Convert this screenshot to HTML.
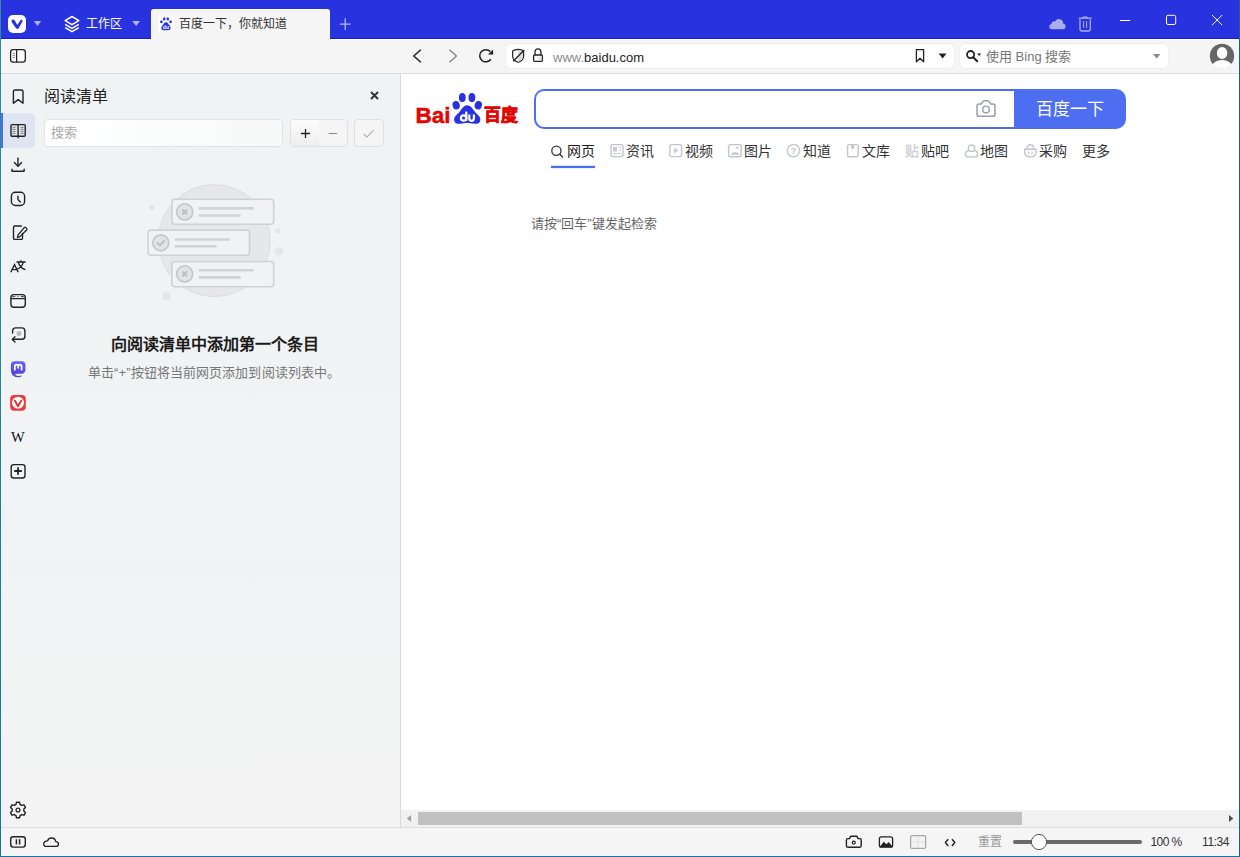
<!DOCTYPE html>
<html lang="zh-CN"><head><meta charset="utf-8">
<style>
*{box-sizing:border-box;margin:0;padding:0}
html,body{width:1240px;height:857px;overflow:hidden}
body{position:relative;background:#f5f5f5;font-family:"Liberation Sans",sans-serif;color:#222}
.a{position:absolute}
svg{position:absolute;overflow:visible}
</style></head><body>
<!-- window borders -->
<div class="a" style="left:0;top:0;width:1px;height:857px;background:linear-gradient(#2e8c9c,#1a72a0)"></div>
<div class="a" style="left:1239px;top:0;width:1px;height:857px;background:#1a5c9c"></div>
<div class="a" style="left:0;top:856px;width:1240px;height:1px;background:#1b74a0"></div>

<!-- title bar -->
<div class="a" style="left:1px;top:0;width:1238px;height:38px;background:#2832de"></div>
<div class="a" style="left:1px;top:38px;width:1238px;height:1px;background:#1820cc"></div>
<div class="a" style="left:1px;top:39px;width:1238px;height:1px;background:#fcfdf9"></div>
<!-- vivaldi logo -->
<svg style="left:0;top:0" width="1240" height="40" viewBox="0 0 1240 40">
  <rect x="8" y="15" width="18" height="18" rx="5" fill="#fff"/>
  <path d="M11.6 21.9 Q11 20.2 12.6 19.6 Q14 19.2 14.8 20.5 L17.3 24.9 L20.6 20.1 Q21.3 19.4 22.2 19.9 Q23 20.5 22.6 21.3 L18.6 28.2 Q17.3 29.6 16 28.2 Z" fill="#2832de"/>
  <path d="M33.8 21 L41.2 21 L37.5 26 Z" fill="#aeb0f0"/>
  <!-- layers icon -->
  <g fill="none" stroke="#fff" stroke-width="1.5" stroke-linejoin="round">
    <path d="M72 16.5 L78.8 20.6 L72 24.7 L65.2 20.6 Z"/>
    <path d="M65.2 24.3 L72 28.4 L78.8 24.3"/>
    <path d="M65.2 27.6 L72 31.7 L78.8 27.6"/>
  </g>
  <path d="M132.2 21 L140 21 L136.1 26 Z" fill="#aeb0f0"/>
  <!-- tab -->
  <path d="M151 40 L151 12 Q151 9 154 9 L327 9 Q330 9 330 12 L330 40 Z" fill="#f5f5f5"/><path d="M151.5 38 V12 Q151.5 9.5 154 9.5 H327 Q329.5 9.5 329.5 12 V38" fill="none" stroke="#fff" stroke-width="1" opacity=".6"/>
  <!-- plus -->
  <path d="M345.2 18.3 V30 M339.8 24.2 H350.6" stroke="#b4b7f2" stroke-width="1.3"/>
  <!-- cloud -->
  <path d="M1051.5 29.2 H1062.5 A2.8 2.8 0 0 0 1063 23.6 A4.2 4.2 0 0 0 1055 21.5 A3 3 0 0 0 1051.3 23.9 A2.7 2.7 0 0 0 1051.5 29.2 Z" fill="#a9adf0"/>
  <!-- trash -->
  <g fill="none" stroke="#a9adf0" stroke-width="1.3">
    <path d="M1078.7 18.2 H1091.6"/>
    <path d="M1082.3 18.2 Q1082.6 16.9 1085.1 16.9 Q1087.6 16.9 1087.9 18.2"/>
    <path d="M1080 19.3 V29 Q1080 31 1082 31 H1088.3 Q1090.3 31 1090.3 29 V19.3"/>
    <path d="M1083.6 21 V28 M1086.6 21 V28" stroke-width="1"/>
  </g>
  <!-- window controls -->
  <path d="M1120 20.5 H1130.2" stroke="#fff" stroke-width="1"/>
  <rect x="1166.5" y="15.3" width="9.2" height="9.2" rx="1.5" fill="none" stroke="#fff" stroke-width="1"/>
  <path d="M1212 15 L1222.2 25.2 M1222.2 15 L1212 25.2" stroke="#fff" stroke-width="1"/>
</svg>
<div class="a" style="left:86px;top:15px;font-size:12px;line-height:18px;color:#fff">工作区</div>
<!-- baidu favicon -->
<svg style="left:158px;top:16px" width="16" height="16" viewBox="0 0 16 16">
  <rect width="16" height="16" rx="2" fill="#fff"/>
  <ellipse cx="6.2" cy="2.9" rx="1.3" ry="1.6" fill="#2932e1"/>
  <ellipse cx="9.8" cy="2.9" rx="1.3" ry="1.6" fill="#2932e1"/>
  <ellipse cx="3.4" cy="5.7" rx="1.3" ry="1.5" fill="#2932e1"/>
  <ellipse cx="12.6" cy="5.7" rx="1.3" ry="1.5" fill="#2932e1"/>
  <path d="M8 6.3 C6 6.3 5.5 8.5 4.2 9.8 C2.8 11.2 3 14.3 5.6 14.3 H10.4 C13 14.3 13.2 11.2 11.8 9.8 C10.5 8.5 10 6.3 8 6.3 Z" fill="#2932e1"/>
  <text x="8" y="13.4" font-size="5.2" font-weight="bold" fill="#fff" text-anchor="middle" font-family="Liberation Sans">du</text>
</svg>
<div class="a" style="left:179px;top:15px;font-size:12px;line-height:18px;color:#333">百度一下，你就知道</div>

<!-- toolbar -->
<div class="a" id="toolbar" style="left:1px;top:40px;width:1238px;height:33px;background:#f5f5f5"></div>
<div class="a" style="left:1px;top:73px;width:1238px;height:1px;background:#dcdcdc"></div>
<div class="a" style="left:506px;top:44px;width:448px;height:24px;background:#fff;border-radius:5px;box-shadow:0 0 0 1px #efefef"></div>
<div class="a" style="left:960px;top:44px;width:208px;height:24px;background:#fff;border-radius:5px;box-shadow:0 0 0 1px #efefef"></div>
<svg style="left:0;top:40px" width="1240" height="34" viewBox="0 40 1240 34">
  <!-- panel toggle -->
  <rect x="10.6" y="49.6" width="14.7" height="12.6" rx="2.6" fill="#fff" stroke="#222" stroke-width="1.3"/>
  <path d="M16.6 49.6 V62.2" stroke="#222" stroke-width="1.3"/>
  <path d="M12.8 53.4 H14.8 M12.8 55.4 H14.8 M12.8 57.4 H14.8" stroke="#555" stroke-width="0.8"/>
  <!-- back / forward -->
  <path d="M420.8 49.8 L413.8 56 L420.8 62.2" fill="none" stroke="#222" stroke-width="1.5"/>
  <path d="M449.4 49.8 L456.4 56 L449.4 62.2" fill="none" stroke="#8a8a8a" stroke-width="1.5"/>
  <!-- reload -->
  <path d="M490.3 51.6 A6.1 6.1 0 1 0 490.8 59.3" fill="none" stroke="#222" stroke-width="1.5"/>
  <path d="M487.9 54.6 L493.1 54.6 L493.1 49.6 Z" fill="#222"/>
  <!-- shield -->
  <path d="M518.2 49.3 Q521.5 49.6 523.6 51 V56 Q523.6 60.5 518.2 62.3 Q512.6 60.5 512.6 56 V51 Q514.8 49.6 518.2 49.3 Z" fill="none" stroke="#222" stroke-width="1.2"/>
  <path d="M518.2 49.9 Q521.2 50.2 523 51.3 V56 Q523 60 518.2 61.7 Z" fill="#ddd"/>
  <path d="M513.2 61.3 L524.2 50" stroke="#222" stroke-width="1.3"/>
  <!-- lock -->
  <path d="M535 55 V52.2 Q535 48.9 538 48.9 Q541 48.9 541 52.2 V55" fill="none" stroke="#222" stroke-width="1.3"/>
  <rect x="533.6" y="55" width="8.8" height="6.3" rx="1" fill="#fff" stroke="#222" stroke-width="1.3"/>
  <rect x="538.5" y="57" width="2.8" height="3.4" fill="#ddd"/>
  <!-- bookmark -->
  <path d="M916.4 49.6 H923.6 V61.8 L920 58.3 L916.4 61.8 Z" fill="none" stroke="#222" stroke-width="1.3" stroke-linejoin="round"/>
  <path d="M938.7 53.5 H946.5 L942.6 58.6 Z" fill="#222"/>
  <!-- search icon -->
  <circle cx="970.6" cy="54.6" r="3.6" fill="none" stroke="#222" stroke-width="1.8"/>
  <path d="M973.2 57.2 L977.2 61.2" stroke="#222" stroke-width="2" stroke-linecap="round"/>
  <path d="M977 53.5 H981.3 L979.15 56 Z" fill="#222"/>
  <path d="M1153 54 H1160.4 L1156.7 58.6 Z" fill="#888"/>
  <!-- avatar -->
  <defs><clipPath id="av"><circle cx="1222" cy="56" r="12.6"/></clipPath></defs>
  <circle cx="1222" cy="56" r="12.2" fill="#666"/>
  <g clip-path="url(#av)">
    <rect x="1217" y="47" width="10.2" height="12" rx="5" ry="5.6" fill="#fff"/>
    <ellipse cx="1222.1" cy="71" rx="12" ry="11" fill="#fff"/>
  </g>
</svg>
<div class="a" style="left:553px;top:48.5px;font-size:13px;line-height:18px;color:#222;white-space:nowrap"><span style="color:#8b8b8b">www.</span>baidu.com</div>
<div class="a" style="left:986px;top:48px;font-size:13px;line-height:18px;color:#777;white-space:nowrap">使用 Bing 搜索</div>

<!-- panel bar + panel -->
<div class="a" style="left:1px;top:74px;width:399px;height:753px;background:linear-gradient(#eff3f4,#f1f3f4 50%,#f3f3f3)"></div>
<div class="a" style="left:400px;top:74px;width:1px;height:753px;background:#d9d9d9"></div>
<!-- active panel highlight -->
<div class="a" style="left:1px;top:113px;width:34px;height:35px;background:#dfe4f2;border-radius:0 5px 5px 0"></div>
<div class="a" style="left:1px;top:113px;width:2px;height:35px;background:#4a6ee8"></div>
<svg style="left:0;top:74px" width="400" height="753" viewBox="0 74 400 753">
 <g fill="none" stroke="#222" stroke-width="1.4" stroke-linejoin="round" stroke-linecap="round">
  <!-- bookmark -->
  <path d="M13.4 91.5 Q13.4 90 15 90 H21.3 Q23 90 23 91.5 V103.3 L18.2 99.6 L13.4 103.3 Z"/>
  <!-- book -->
  <path d="M11 125.6 Q11 124.6 12 124.6 H24.2 Q25.2 124.6 25.2 125.6 V135.3 Q25.2 136.3 24.2 136.3 H12 Q11 136.3 11 135.3 Z"/>
  <path d="M18.1 124.6 V137.8"/>
 </g>
 <path d="M12.6 127.4 H15.6 M12.6 129.4 H15.6 M12.6 131.4 H15.6 M12.6 133.4 H15.6 M20.6 127.4 H23.6 M20.6 129.4 H23.6 M20.6 131.4 H23.6 M20.6 133.4 H23.6" stroke="#777" stroke-width="0.9"/>
 <g fill="none" stroke="#222" stroke-width="1.4" stroke-linejoin="round" stroke-linecap="round">
  <!-- download -->
  <path d="M18 158.3 V166"/>
  <path d="M14.4 162.6 L18 166.2 L21.6 162.6"/>
  <path d="M12 169.3 V171.3 H24.1 V169.3"/>
  <!-- history -->
  <rect x="11.4" y="192.3" width="13.2" height="13.2" rx="4"/>
  <path d="M18 196.2 V199.6 L20.3 201.9"/>
  <!-- notes -->
  <path d="M21.3 226 H14.8 Q13.5 226 13.5 227.3 V238.2 Q13.5 239.4 14.8 239.4 H21.2 Q22.5 239.4 22.5 238.2 V233.4"/>
  <path d="M24.2 227.6 Q25 226.8 25.8 227.6 L26.6 228.4 Q27.4 229.2 26.6 230 L20 236.6 L17.4 237.4 L18.2 234.8 Z" stroke-width="1.3"/>
  <!-- window -->
  <rect x="10.9" y="294.6" width="14.4" height="12.6" rx="3"/>
  <path d="M10.9 298.6 H25.3"/>
  <!-- feed loop -->
  <path d="M12.6 333 V331 Q12.6 327.9 15.7 327.9 H21.8 Q24.9 327.9 24.9 331 V336.2 Q24.9 339.3 21.8 339.3 H12.6"/>
  <path d="M15 336.8 L12.3 339.4 L15 342"/>
  <!-- add -->
  <rect x="11.2" y="464.6" width="13.8" height="13.4" rx="2.5"/>
 </g>
 <path d="M12.2 296.6 H15.3 M17.4 296.6 H18.6 M20.7 296.6 H24" stroke="#444" stroke-width="1"/>
 <circle cx="19" cy="333.6" r="2.5" fill="#bbb"/>
 <path d="M18 467.2 V474.8 M14.2 471 H21.8" stroke="#222" stroke-width="1.8"/>
 <!-- translate -->
 <path d="M10.8 272.2 L14.5 264.6 L18.2 272.2 M12.4 269.6 H16.6" fill="none" stroke="#222" stroke-width="1.4"/>
 <path d="M16.5 262 H25.7 M21 260.2 V262 M18.3 262.2 Q20 268 25.4 269.6 M23.4 262.2 Q21.8 268 16.8 269.2" fill="none" stroke="#222" stroke-width="1.3"/>
 <!-- mastodon -->
 <defs><linearGradient id="mg" x1="0" y1="0" x2="0" y2="1"><stop offset="0" stop-color="#6364ff"/><stop offset="1" stop-color="#563acc"/></linearGradient></defs>
 <path d="M14.5 361.2 H21.8 Q25.4 361.2 25.4 365 V369.8 Q25.4 373.5 21.3 373.8 H17 Q14.5 374.2 15.5 375.2 Q18 376.6 21.5 375.6 V376.5 Q17 378.2 13.7 376 Q11 374.4 10.9 369.8 V365 Q10.9 361.2 14.5 361.2 Z" fill="url(#mg)"/>
 <path d="M14.8 370.6 V366.4 Q14.8 364.6 16.5 364.6 Q18.2 364.6 18.2 366.4 V368.6 M18.2 368.6 V366.4 Q18.2 364.6 19.9 364.6 Q21.6 364.6 21.6 366.4 V370.6" fill="none" stroke="#fff" stroke-width="1.7"/>
 <!-- vivaldi -->
 <rect x="10.2" y="395" width="15.6" height="15.7" rx="4" fill="#ef3939"/>
 <circle cx="18" cy="402.85" r="6" fill="#fff"/>
 <path d="M14.8 400.6 L18 406.2 L21.2 400.6" fill="none" stroke="#e22b2b" stroke-width="1.9" stroke-linecap="round" stroke-linejoin="round"/>
 <!-- gear -->
 <g transform="translate(18 810)">
  <path id="gear" d="M-2.08 -5.52 L-1.49 -7.76 L1.49 -7.76 L2.08 -5.52 L3.74 -4.56 L5.97 -5.17 L7.46 -2.59 L5.82 -0.96 L5.82 0.96 L7.46 2.59 L5.97 5.17 L3.74 4.56 L2.08 5.52 L1.49 7.76 L-1.49 7.76 L-2.08 5.52 L-3.74 4.56 L-5.97 5.17 L-7.46 2.59 L-5.82 0.96 L-5.82 -0.96 L-7.46 -2.59 L-5.97 -5.17 L-3.74 -4.56 Z" fill="none" stroke="#222" stroke-width="1.4" stroke-linejoin="round"/>
  <circle r="1.9" fill="none" stroke="#222" stroke-width="1.3"/>
 </g>
</svg>
<div class="a" style="left:11px;top:429px;font-family:'Liberation Serif',serif;font-size:14.5px;line-height:16px;color:#111">W</div>
<div class="a" style="left:44px;top:87px;font-size:16px;line-height:20px;color:#222">阅读清单</div>
<svg style="left:370px;top:91px" width="9" height="9" viewBox="0 0 9 9"><path d="M1 1 L8 8 M8 1 L1 8" stroke="#333" stroke-width="2"/></svg>
<div class="a" style="left:44px;top:119px;width:239px;height:28px;background:linear-gradient(90deg,#fff,#f7f9f9);border:1px solid #e2e4e4;border-radius:4px"></div>
<div class="a" style="left:51px;top:124px;font-size:13px;line-height:18px;color:#a8a8a8">搜索</div>
<div class="a" style="left:290px;top:119px;width:58px;height:28px;background:#f5f5f5;border:1px solid #e0e0e0;border-radius:4px;overflow:hidden"><div style="width:28px;height:26px;background:linear-gradient(#fdfdfd,#eeeeee)"></div></div>
<div class="a" style="left:354px;top:119px;width:30px;height:28px;background:#f5f5f5;border:1px solid #e0e0e0;border-radius:4px"></div>
<svg style="left:290px;top:119px" width="94" height="28" viewBox="290 119 94 28">
 <path d="M305.5 129 V138 M301 133.5 H310" stroke="#222" stroke-width="1.3"/>
 <path d="M328.7 133.5 H337.2" stroke="#888" stroke-width="1"/>
 <path d="M363.8 134.2 L366.8 137.1 L373.6 130.4" fill="none" stroke="#aaa" stroke-width="1.1"/>
</svg>

<!-- illustration -->
<svg style="left:140px;top:175px" width="150" height="130" viewBox="140 175 150 130">
 <circle cx="214.2" cy="240.6" r="56" fill="#e5e7e8" stroke="#dcdede" stroke-width="1"/>
 <circle cx="151.8" cy="207.6" r="2.8" fill="#e4e6e7"/>
 <circle cx="277.7" cy="230.8" r="2.8" fill="#e4e6e7"/>
 <circle cx="279.2" cy="251.3" r="4.3" fill="#e4e6e7"/>
 <circle cx="166.5" cy="296.3" r="4.3" fill="#e4e6e7"/>
 <g stroke="#d0d1d2" stroke-width="1.6" fill="#f0f2f3">
  <rect x="171.9" y="199.3" width="101.8" height="25" rx="3"/>
  <rect x="148.1" y="230.1" width="101.4" height="25.2" rx="3"/>
  <rect x="171.9" y="261.5" width="101.8" height="25.2" rx="3"/>
 </g>
 <g stroke="#c6c7c8" stroke-width="1.7" fill="#e2e3e4">
  <circle cx="184.7" cy="211.9" r="8"/>
  <circle cx="160.8" cy="242.8" r="8"/>
  <circle cx="184.7" cy="273.9" r="8"/>
 </g>
 <g stroke="#bfc0c1" stroke-width="2.1" fill="none" stroke-linecap="round" stroke-linejoin="round">
  <path d="M182.9 210.1 L186.5 213.7 M186.5 210.1 L182.9 213.7"/>
  <path d="M182.9 272.1 L186.5 275.7 M186.5 272.1 L182.9 275.7"/>
  <path d="M157.4 243 L159.8 245.3 L164.2 241"/>
 </g>
 <g stroke="#d2d3d4" stroke-width="2.6" fill="none" stroke-linecap="round">
  <path d="M199.8 208.4 H252.6 M199.8 215.5 H239.6"/>
  <path d="M175.8 239.5 H228.6 M175.8 246.3 H215.4"/>
  <path d="M199.8 270.3 H252.6 M199.8 277.4 H239.6"/>
 </g>
</svg>
<div class="a" style="left:37px;top:335px;width:356px;text-align:center;font-size:16px;line-height:20px;font-weight:bold;color:#1a1a1a;white-space:nowrap">向阅读清单中添加第一个条目</div>
<div class="a" style="left:39px;top:364px;width:350px;text-align:center;font-size:13px;line-height:18px;color:#777;white-space:nowrap;letter-spacing:0.1px">单击“+”按钮将当前网页添加到阅读列表中。</div>
<!-- web content -->
<div class="a" style="left:401px;top:74px;width:838px;height:736px;background:#fff"></div>

<!-- baidu logo -->
<div class="a" style="left:415.5px;top:101px;font-size:22.5px;line-height:30px;font-weight:bold;color:#e10601;letter-spacing:0px;-webkit-text-stroke:0.5px #e10601">Bai</div>
<div class="a" style="left:483.5px;top:102.5px;font-size:16.8px;line-height:26px;font-weight:bold;color:#e10601;letter-spacing:0px;-webkit-text-stroke:0.7px #e10601">百度</div>
<svg style="left:450px;top:90px" width="36" height="36" viewBox="450 90 36 36">
 <ellipse cx="462.3" cy="97.6" rx="3.4" ry="4.6" fill="#2932e1"/>
 <ellipse cx="471.9" cy="97.6" rx="3.4" ry="4.6" fill="#2932e1"/>
 <ellipse cx="456.2" cy="105.2" rx="3.6" ry="4.3" fill="#2932e1" transform="rotate(-15 456.2 105.2)"/>
 <ellipse cx="478.3" cy="105.2" rx="3.6" ry="4.3" fill="#2932e1" transform="rotate(15 478.3 105.2)"/>
 <path d="M467.2 105.3 C463.2 105.3 461.8 109.6 459 112.4 C456 115.4 453.6 117 454.2 120.5 C454.8 123.5 457.5 124 460 123.8 C463 123.5 465 123 467.2 123 C469.4 123 471.4 123.5 474.4 123.8 C477 124 479.7 123.5 480.3 120.5 C480.9 117 478.5 115.4 475.5 112.4 C472.7 109.6 471.3 105.3 467.2 105.3 Z" fill="#2932e1"/>
 <g fill="none" stroke="#fff" stroke-width="2.2">
  <circle cx="463.6" cy="118" r="2.7"/>
  <path d="M466.3 111.6 V121"/>
  <path d="M469.3 114.4 V118.3 Q469.3 120.8 471.6 120.8 Q473.9 120.8 473.9 118.3 V114.4"/>
 </g>
</svg>
<!-- search box -->
<div class="a" style="left:534px;top:89px;width:482px;height:40px;border:2px solid #4e6ef2;border-right:0;border-radius:10px 0 0 10px;background:#fff"></div>
<div class="a" style="left:1014px;top:89px;width:112px;height:40px;background:#4e6ef2;border-radius:0 10px 10px 0"></div>
<div class="a" style="left:1036px;top:98px;font-size:17px;line-height:24px;color:#fff;letter-spacing:0px">百度一下</div>
<svg style="left:974px;top:98px" width="24" height="22" viewBox="974 98 24 22">
 <path d="M981.4 103.9 L983.2 101.4 Q983.6 100.8 984.4 100.8 H987.6 Q988.4 100.8 988.8 101.4 L990.6 103.9 H992.8 Q995 103.9 995 106.1 V114.2 Q995 116.3 992.8 116.3 H979.2 Q977 116.3 977 114.2 V106.1 Q977 103.9 979.2 103.9 Z" fill="none" stroke="#9a9da8" stroke-width="1.5" stroke-linejoin="round"/>
 <circle cx="986" cy="109.4" r="3.3" fill="none" stroke="#9a9da8" stroke-width="1.4"/>
</svg>
<!-- nav -->
<svg style="left:540px;top:140px" width="600" height="32" viewBox="540 140 600 32">
 <circle cx="556.4" cy="150.8" r="4.6" fill="none" stroke="#333" stroke-width="1.3"/>
 <path d="M559.8 154.3 L562.6 157" stroke="#333" stroke-width="1.4" stroke-linecap="round"/>
 <rect x="551" y="165.8" width="44" height="2.3" fill="#4e6ef2"/>
 <g fill="none" stroke="#c2c5cc" stroke-width="1.4">
  <rect x="611" y="144.6" width="12" height="12" rx="2"/>
  <rect x="669.8" y="144.6" width="11.8" height="12" rx="2"/>
  <rect x="728.6" y="144.6" width="12.6" height="12.2" rx="2"/>
  <circle cx="793.5" cy="150.6" r="6.2"/>
  <rect x="847.6" y="144.6" width="10.6" height="12.2" rx="1.6"/>
 </g>
 <path d="M613 147 H617 V151.5 H613 Z" fill="#c9cbd0"/>
 <path d="M618.5 147.6 H621 M618.5 150 H621 M613 153.6 H621" stroke="#c9cbd0" stroke-width="1"/>
 <path d="M674 147.8 L678.6 150.6 L674 153.4 Z" fill="#c9cbd0"/>
 <path d="M730.5 155 Q733 150.8 736 152.6 Q738 151 739.5 154.8 Z" fill="#c9cbd0"/>
 <circle cx="737.3" cy="147.8" r="1.3" fill="#c9cbd0"/>
 <text x="793.5" y="154.2" font-size="9.5" font-weight="bold" text-anchor="middle" fill="#c2c5cc" font-family="Liberation Sans">?</text>
 <path d="M851 144.8 V149.6 L852.6 148.5 L854.2 149.6 V144.8" fill="#c9cbd0"/>
</svg>
<div class="a" style="left:567px;top:141px;font-size:14px;line-height:20px;color:#222">网页</div>
<div class="a" style="left:626px;top:141px;font-size:14px;line-height:20px;color:#333">资讯</div>
<div class="a" style="left:685px;top:141px;font-size:14px;line-height:20px;color:#333">视频</div>
<div class="a" style="left:744px;top:141px;font-size:14px;line-height:20px;color:#333">图片</div>
<div class="a" style="left:803px;top:141px;font-size:14px;line-height:20px;color:#333">知道</div>
<div class="a" style="left:862px;top:141px;font-size:14px;line-height:20px;color:#333">文库</div>
<div class="a" style="left:921px;top:141px;font-size:14px;line-height:20px;color:#333">贴吧</div>
<div class="a" style="left:980px;top:141px;font-size:14px;line-height:20px;color:#333">地图</div>
<div class="a" style="left:1039px;top:141px;font-size:14px;line-height:20px;color:#333">采购</div>
<div class="a" style="left:1082px;top:141px;font-size:14px;line-height:20px;color:#333">更多</div>
<div class="a" style="left:905px;top:141px;font-size:14px;line-height:20px;color:#ccced3;-webkit-text-stroke:0.3px #ccced3">贴</div>
<svg style="left:960px;top:140px" width="80" height="22" viewBox="960 140 80 22">
 <g fill="none" stroke="#c2c5cc" stroke-width="1.4" stroke-linejoin="round">
  <circle cx="971.6" cy="148.2" r="3.2"/>
  <path d="M968.6 150.8 Q965.2 151.2 965.3 154.4 Q965.5 156.9 968 156.9 H975.2 Q977.7 156.9 977.8 154.4 Q977.9 151.2 974.6 150.8"/>
  <path d="M1024.6 149.3 H1036 V152 Q1036 156.9 1030.3 156.9 Q1024.6 156.9 1024.6 152 Z"/>
  <path d="M1026.8 149.2 Q1027 144.8 1030.3 144.8 Q1033.6 144.8 1033.8 149.2"/>
  <path d="M1028.6 151.6 V154.4 M1032 151.6 V154.4" stroke-width="1.1"/>
 </g>
</svg>
<div class="a" style="left:531px;top:215px;font-size:13px;line-height:18px;color:#666">请按“回车”键发起检索</div>
<!-- scrollbar -->
<div class="a" style="left:401px;top:810px;width:838px;height:17px;background:#f1f1f1"></div>
<div class="a" style="left:418px;top:812px;width:604px;height:13px;background:#c1c1c1"></div>

<!-- status bar -->
<div class="a" style="left:1px;top:827px;width:1238px;height:1px;background:#dedede"></div>
<div class="a" style="left:1px;top:828px;width:1238px;height:28px;background:#f5f5f5"></div>

<!-- scrollbar arrows -->
<svg style="left:400px;top:810px" width="840" height="17" viewBox="400 810 840 17">
 <path d="M411.1 814.9 V822.1 L406.8 818.5 Z" fill="#a3a3a3"/>
 <path d="M1229 815 V822 L1233.3 818.5 Z" fill="#505050"/>
</svg>
<!-- status bar -->
<svg style="left:0;top:828px" width="1240" height="28" viewBox="0 828 1240 28">
 <g fill="none" stroke="#222" stroke-width="1.4" stroke-linejoin="round">
  <rect x="10.7" y="836.7" width="14.6" height="10.4" rx="2.5"/>
  <path d="M16.4 839.3 V844.5 M19.6 839.3 V844.5" stroke-width="1.5"/>
  <path d="M45.5 846.4 H56.3 Q58.6 846.4 58.4 843.8 Q58.2 841.6 55.8 841.6 Q55 838 51.6 838 Q48.6 838 47.6 840.8 Q43.8 841 43.7 843.8 Q43.8 846.4 45.5 846.4 Z" stroke-width="1.3"/>
  <!-- camera -->
  <path d="M849.5 838.6 L850.8 836.2 H856.8 L858.1 838.6 H859.8 Q861.2 838.6 861.2 840 V845.8 Q861.2 847.2 859.8 847.2 H847.8 Q846.4 847.2 846.4 845.8 V840 Q846.4 838.6 847.8 838.6 Z"/>
  <circle cx="853.8" cy="842.6" r="1.5" stroke-width="1.2"/>
  <!-- code -->
  <path d="M948.2 839.3 L945.4 842.6 L948.2 845.9 M952 839.3 L954.8 842.6 L952 845.9" stroke-width="1.5"/>
 </g>
 <!-- image icon -->
 <rect x="879.4" y="836.8" width="13.2" height="10.4" rx="2" fill="none" stroke="#222" stroke-width="1.3"/>
 <path d="M879.6 847 L883.8 841.8 L886.4 844.2 L888.6 842 L892.5 846.4 V847.2 H879.6 Z" fill="#222"/>
 <path d="M879.4 847.2 H892.6 V845 Q892.6 847.2 892.6 847.2" fill="#222"/>
 <!-- grid icon -->
 <rect x="910.6" y="835.6" width="15" height="12.8" rx="1.5" fill="#f3f3f3" stroke="#a8a8a8" stroke-width="1.3"/>
 <path d="M918.1 836.2 V847.8 M911.2 842 H925" stroke="#e0e0e0" stroke-width="1"/>
 <!-- slider -->
 <path d="M1015 842 H1140" stroke="#6a6a6a" stroke-width="4" stroke-linecap="round"/>
 <circle cx="1039" cy="842" r="7.6" fill="#fff" stroke="#555" stroke-width="1"/>
</svg>
<div class="a" style="left:977.5px;top:833px;font-size:12px;line-height:18px;color:#999">重置</div>
<div class="a" style="left:1150.5px;top:833px;font-size:12px;line-height:18px;color:#333;letter-spacing:-0.6px">100 %</div>
<div class="a" style="left:1202px;top:833px;font-size:12px;line-height:18px;color:#333;letter-spacing:-0.4px">11:34</div>
</body></html>
